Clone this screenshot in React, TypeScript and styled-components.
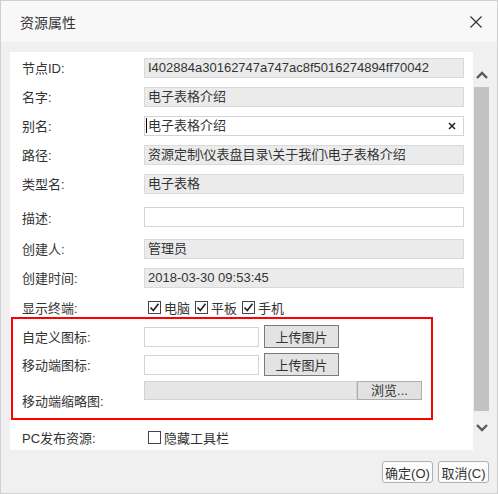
import * as React from 'react';
import styled, { createGlobalStyle } from 'styled-components';

const GlobalStyle = createGlobalStyle`
  html, body {
    margin: 0;
    padding: 0;
    background: #ffffff;
  }
  body {
    font-family: "Liberation Sans", "Noto Sans CJK SC", sans-serif;
    font-size: 13px;
    color: #333333;
  }
`;

const Dialog = styled.div`
  box-sizing: border-box;
  width: 498px;
  height: 494px;
  border: 1px solid #cfcfcf;
  background: #f0f0f0;
  display: flex;
  flex-direction: column;
`;

const TitleBar = styled.div`
  height: 41px;
  display: flex;
  align-items: center;
  justify-content: space-between;
  padding: 0 14px 0 19px;
  background: #f8f8f8;
  font-size: 14px;
  color: #333333;
`;

const CloseButton = styled.div`
  width: 14px;
  height: 14px;
  display: flex;
  align-items: center;
  justify-content: center;
`;

const Body = styled.div`
  display: flex;
  padding: 10px 7px 0 9px;
  height: 398px;
`;

const Panel = styled.div`
  flex: 1;
  background: #ffffff;
  overflow: hidden;
  padding: 1px 9px 0 0;
`;

const Row = styled.div<{ $h: number; $pt?: number }>`
  display: flex;
  align-items: center;
  height: ${p => p.$h}px;
  padding-top: ${p => p.$pt || 0}px;
  padding-left: 12px;
  box-sizing: border-box;
`;

const Label = styled.div<{ $pt?: number }>`
  width: 122px;
  flex: none;
  padding-top: ${p => p.$pt || 0}px;
  white-space: nowrap;
`;

const Field = styled.div<{ $editable?: boolean; $w?: number }>`
  position: relative;
  box-sizing: border-box;
  width: ${p => (p.$w ? `${p.$w}px` : 'auto')};
  flex: ${p => (p.$w ? 'none' : '1')};
  height: 20px;
  line-height: 18px;
  padding: 0 3px;
  border: 1px solid ${p => (p.$editable ? '#d4d4d4' : '#dadada')};
  background: ${p => (p.$editable ? '#ffffff' : '#ebebeb')};
  white-space: nowrap;
  overflow: hidden;
`;

const Caret = styled.span`
  display: inline-block;
  width: 1px;
  height: 15px;
  background: #000000;
  vertical-align: -3px;
  margin-left: -2px;
  margin-right: 1px;
`;

const ClearIcon = styled.span`
  position: absolute;
  right: 7px;
  top: 5px;
  width: 8px;
  height: 8px;
  display: flex;
`;

const Checks = styled.div`
  display: flex;
  align-items: center;
  padding-left: 4px;
`;

const CheckItem = styled.label`
  display: flex;
  align-items: center;
  gap: 2px;
  margin-right: 5px;
`;

const Box = styled.span`
  box-sizing: border-box;
  width: 13px;
  height: 13px;
  border: 1px solid #444444;
  background: #ffffff;
  display: flex;
  align-items: center;
  justify-content: center;
  margin-right: 1px;
`;

const Highlight = styled.div`
  margin-left: 1px;
  width: 422px;
  box-sizing: border-box;
  border: 2px solid #ff0000;
  padding: 6px 0 0 0;
  height: 103px;
  display: flex;
  flex-direction: column;
  gap: 5px;
`;

const HRow = styled.div<{ $h: number }>`
  display: flex;
  align-items: center;
  padding-left: 9px;
  height: ${p => p.$h}px;
`;

const UploadButton = styled.div`
  box-sizing: border-box;
  margin-left: 5px;
  width: 75px;
  height: 23px;
  border: 1px solid #7a7a7a;
  background: #e3e3e3;
  display: flex;
  align-items: center;
  justify-content: center;
`;

const ThumbColumn = styled.div`
  display: flex;
  flex-direction: column;
  align-self: flex-start;
  height: 35px;
`;

const ThumbBar = styled.div`
  display: flex;
  height: 19px;
`;

const ThumbTrack = styled.div`
  box-sizing: border-box;
  width: 213px;
  border: 1px solid #d2d2d2;
  background: #e6e6e6;
`;

const BrowseButton = styled.div`
  box-sizing: border-box;
  width: 65px;
  border: 1px solid #adadad;
  background: #e1e1e1;
  display: flex;
  align-items: center;
  justify-content: center;
  line-height: 1;
`;

const ScrollBar = styled.div`
  width: 17px;
  display: flex;
  flex-direction: column;
  align-items: center;
`;

const ScrollArrow = styled.div<{ $h: number; $pt: number }>`
  height: ${p => p.$h}px;
  box-sizing: border-box;
  padding-top: ${p => p.$pt}px;
  display: flex;
  justify-content: center;
`;

const ScrollThumb = styled.div`
  width: 15px;
  height: 324px;
  background: #c2c2c2;
`;

const Footer = styled.div`
  display: flex;
  justify-content: flex-end;
  gap: 5px;
  padding: 11px 8px 0 0;
`;

const FooterButton = styled.div<{ $w: number }>`
  box-sizing: border-box;
  width: ${p => p.$w}px;
  height: 22px;
  border: 1px solid #a9b0b8;
  border-radius: 3px;
  background: #fcfcfc;
  display: flex;
  align-items: center;
  justify-content: center;
`;

const Tick = () => (
  <svg width="11" height="11" viewBox="0 0 11 11">
    <polyline points="1.5,5.5 4.3,8.5 9.5,1.8" fill="none" stroke="#222" strokeWidth="1.6" />
  </svg>
);

const CheckBox = ({ checked }: { checked?: boolean }) => <Box>{checked ? <Tick /> : null}</Box>;

const Chevron = ({ up }: { up?: boolean }) => (
  <svg width="12" height="8" viewBox="0 0 12 8">
    <polyline
      points={up ? '1,7 6,2 11,7' : '1,1 6,6 11,1'}
      fill="none"
      stroke="#5a5a5a"
      strokeWidth="2.4"
    />
  </svg>
);

const fields = [
  { label: '节点ID:', value: 'I402884a30162747a747ac8f5016274894ff70042' },
  { label: '名字:', value: '电子表格介绍' },
];

const moreFields = [
  { label: '路径:', value: '资源定制\\仪表盘目录\\关于我们\\电子表格介绍' },
  { label: '类型名:', value: '电子表格' },
];

export default function App() {
  return (
    <>
      <GlobalStyle />
      <Dialog>
        <TitleBar>
          <span>资源属性</span>
          <CloseButton>
            <svg width="12" height="12" viewBox="0 0 12 12">
              <path d="M0.5 0.5 L11.5 11.5 M11.5 0.5 L0.5 11.5" stroke="#333" strokeWidth="1.2" />
            </svg>
          </CloseButton>
        </TitleBar>
        <Body>
          <Panel>
            {fields.map(f => (
              <Row key={f.label} $h={29}>
                <Label>{f.label}</Label>
                <Field>{f.value}</Field>
              </Row>
            ))}
            <Row $h={29}>
              <Label>别名:</Label>
              <Field $editable>
                <Caret />
                电子表格介绍
                <ClearIcon>
                  <svg width="8" height="8" viewBox="0 0 8 8">
                    <path d="M1 1 L7 7 M7 1 L1 7" stroke="#222" strokeWidth="1.5" />
                  </svg>
                </ClearIcon>
              </Field>
            </Row>
            {moreFields.map(f => (
              <Row key={f.label} $h={29}>
                <Label>{f.label}</Label>
                <Field>{f.value}</Field>
              </Row>
            ))}
            <Row $h={36} $pt={2}>
              <Label>描述:</Label>
              <Field $editable />
            </Row>
            <Row $h={29}>
              <Label>创建人:</Label>
              <Field>管理员</Field>
            </Row>
            <Row $h={29}>
              <Label>创建时间:</Label>
              <Field>2018-03-30 09:53:45</Field>
            </Row>
            <Row $h={25} $pt={5}>
              <Label>显示终端:</Label>
              <Checks>
                <CheckItem>
                  <CheckBox checked />
                  电脑
                </CheckItem>
                <CheckItem>
                  <CheckBox checked />
                  平板
                </CheckItem>
                <CheckItem>
                  <CheckBox checked />
                  手机
                </CheckItem>
              </Checks>
            </Row>
            <Highlight>
              <HRow $h={23}>
                <Label>自定义图标:</Label>
                <Field $editable $w={115} />
                <UploadButton>上传图片</UploadButton>
              </HRow>
              <HRow $h={23}>
                <Label>移动端图标:</Label>
                <Field $editable $w={115} />
                <UploadButton>上传图片</UploadButton>
              </HRow>
              <HRow $h={35}>
                <Label $pt={4}>移动端缩略图:</Label>
                <ThumbColumn>
                  <ThumbBar>
                    <ThumbTrack />
                    <BrowseButton>浏览...</BrowseButton>
                  </ThumbBar>
                </ThumbColumn>
              </HRow>
            </Highlight>
            <Row $h={29} $pt={6}>
              <Label>PC发布资源:</Label>
              <Checks>
                <CheckItem>
                  <CheckBox />
                  隐藏工具栏
                </CheckItem>
              </Checks>
            </Row>
          </Panel>
          <ScrollBar>
            <ScrollArrow $h={35} $pt={19}>
              <Chevron up />
            </ScrollArrow>
            <ScrollThumb />
            <ScrollArrow $h={39} $pt={13}>
              <Chevron />
            </ScrollArrow>
          </ScrollBar>
        </Body>
        <Footer>
          <FooterButton $w={51}>确定(O)</FooterButton>
          <FooterButton $w={51}>取消(C)</FooterButton>
        </Footer>
      </Dialog>
    </>
  );
}
